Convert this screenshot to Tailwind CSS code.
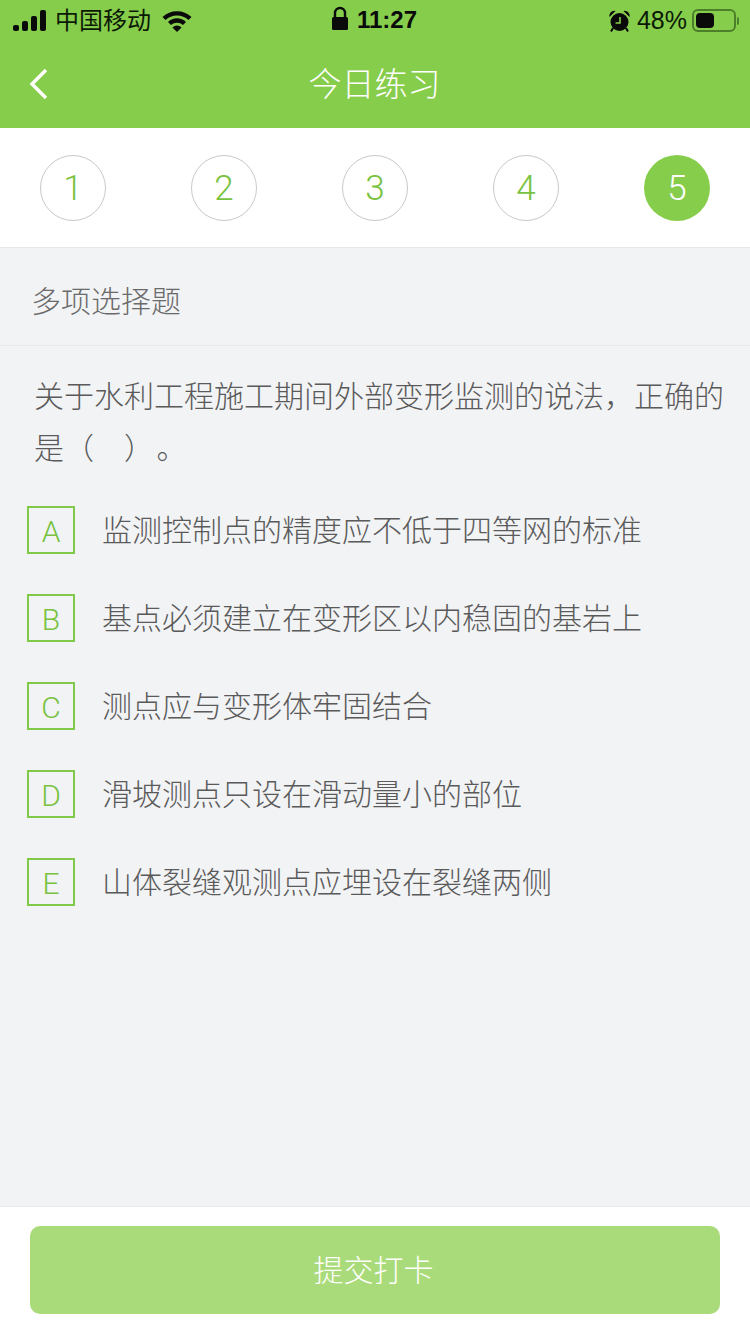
<!DOCTYPE html>
<html lang="en">
<head>
    <meta charset="UTF-8">
    <meta name="viewport" content="width=device-width, initial-scale=1.0">
    <title>今日练习</title>
    <script src="https://cdn.jsdelivr.net/npm/@tailwindcss/browser@4"></script>
</head>
<body class="font-['Liberation_Sans','Noto_Sans_CJK_SC',sans-serif]">
    <div class="w-[750px] h-[1334px] flex flex-col bg-[#f2f3f5] overflow-hidden">
        <!-- header -->
        <div class="h-[128px] bg-[#87cd4c] shrink-0">
            <div class="h-[40px] flex items-center justify-between relative text-[#0b1a05]">
                <div class="flex items-center pl-[13px] pt-[2px] gap-[8px]">
                    <svg width="34" height="22" viewBox="0 0 34 22" fill="#0a0a0a">
                        <rect x="0" y="15" width="6" height="6" rx="2"/>
                        <rect x="9" y="11" width="6" height="10" rx="2"/>
                        <rect x="18" y="6" width="6" height="15" rx="2"/>
                        <rect x="27" y="0" width="6" height="21" rx="2"/>
                    </svg>
                    <span class="text-[24px] leading-none">中国移动</span>
                    <svg class="ml-[3px]" width="30" height="22" viewBox="0 0 30 22" fill="none" stroke="#0a0a0a" stroke-width="4.4">
                        <path d="M2 8.5 A19 19 0 0 1 28 8.5"/>
                        <path d="M7.5 13.5 A11 11 0 0 1 22.5 13.5"/>
                        <path d="M15 22 L10.4 17.4 A6.5 6.5 0 0 1 19.6 17.4 Z" fill="#0a0a0a" stroke="none"/>
                    </svg>
                </div>
                <div class="absolute left-[331px] top-[5px] flex items-center gap-[8px]">
                    <svg width="18" height="26" viewBox="0 0 18 26">
                        <path d="M4 12 V7 A5 5 0 0 1 14 7 V12" fill="none" stroke="#0a0a0a" stroke-width="2.4"/>
                        <rect x="1" y="11" width="16" height="13" rx="1.5" fill="#0a0a0a"/>
                    </svg>
                    <span class="text-[24px] font-bold leading-none text-[#0a0a0a] pt-[3px]">11:27</span>
                </div>
                <div class="flex items-center pr-[11px] pt-[1px]">
                    <svg width="22" height="22" viewBox="0 0 22 22" fill="#0a0a0a">
                        <circle cx="10.5" cy="12" r="9"/>
                        <path d="M0.5 7 A5 5 0 0 1 6.5 1 Z M20.5 7 A5 5 0 0 0 14.5 1 Z"/>
                        <path d="M4 18 L2 21.5 M17 18 L19 21.5" stroke="#0a0a0a" stroke-width="2"/>
                        <path d="M11 7 V13 H6.5" fill="none" stroke="#87cd4c" stroke-width="1.6"/>
                    </svg>
                    <span class="text-[25px] leading-none ml-[6px]">48%</span>
                    <div class="ml-[5px] w-[44px] h-[23px] rounded-[6px] border-2 border-[#4d7f2b] p-[2px]">
                        <div class="w-[18px] h-full rounded-[4px] bg-[#0a0a0a]"></div>
                    </div>
                    <div class="ml-[1px] w-[2px] h-[8px] rounded-r bg-[#4d7f2b]"></div>
                </div>
            </div>
            <div class="h-[88px] relative flex items-center justify-center">
                <svg class="absolute left-[29px] top-[28px]" width="20" height="32" viewBox="0 0 20 32" fill="none" stroke="#fff" stroke-width="3.4">
                    <path d="M17 2 L3 16 L17 30"/>
                </svg>
                <span class="text-[33px] leading-none text-white font-light pr-[1px]">今日练习</span>
            </div>
        </div>
        <!-- question numbers -->
        <div class="h-[120px] bg-white border-b border-[#e8e8e8] shrink-0 flex items-center justify-between px-[40px] font-['Roboto'] font-light">
            <div class="w-[66px] h-[66px] rounded-full border border-[#c9c9c9] flex items-center justify-center pt-[3px] text-[35px] text-[#78c23f]">1</div>
            <div class="w-[66px] h-[66px] rounded-full border border-[#c9c9c9] flex items-center justify-center pt-[3px] text-[35px] text-[#78c23f]">2</div>
            <div class="w-[66px] h-[66px] rounded-full border border-[#c9c9c9] flex items-center justify-center pt-[3px] text-[35px] text-[#78c23f]">3</div>
            <div class="w-[66px] h-[66px] rounded-full border border-[#c9c9c9] flex items-center justify-center pt-[3px] text-[35px] text-[#78c23f]">4</div>
            <div class="w-[66px] h-[66px] rounded-full bg-[#87cd4c] flex items-center justify-center pt-[3px] text-[35px] text-white">5</div>
        </div>
        <!-- question type -->
        <div class="h-[98px] border-b border-[#e8e9eb] shrink-0 flex items-center pl-[31px] pt-[10px] text-[30px] text-[#6a6a6a] font-light">多项选择题</div>
        <!-- question -->
        <div class="pl-[34px] pr-[20px] pt-[25px] text-[30px] leading-[52px] text-[#5a5a5a] font-light">关于水利工程施工期间外部变形监测的说法，正确的是（&emsp;）&hairsp;。</div>
        <!-- options -->
        <div class="flex flex-col gap-[40px] pl-[27px] pt-[31px]">
            <div class="flex items-center h-[48px]">
                <div class="w-[48px] h-[48px] border-2 border-[#82c94a] flex items-center justify-center pt-[2px] text-[30px] text-[#78c23f] font-['Roboto'] font-light">A</div>
                <span class="ml-[27px] text-[30px] text-[#5a5a5a] font-light">监测控制点的精度应不低于四等网的标准</span>
            </div>
            <div class="flex items-center h-[48px]">
                <div class="w-[48px] h-[48px] border-2 border-[#82c94a] flex items-center justify-center pt-[2px] text-[30px] text-[#78c23f] font-['Roboto'] font-light">B</div>
                <span class="ml-[27px] text-[30px] text-[#5a5a5a] font-light">基点必须建立在变形区以内稳固的基岩上</span>
            </div>
            <div class="flex items-center h-[48px]">
                <div class="w-[48px] h-[48px] border-2 border-[#82c94a] flex items-center justify-center pt-[2px] text-[30px] text-[#78c23f] font-['Roboto'] font-light">C</div>
                <span class="ml-[27px] text-[30px] text-[#5a5a5a] font-light">测点应与变形体牢固结合</span>
            </div>
            <div class="flex items-center h-[48px]">
                <div class="w-[48px] h-[48px] border-2 border-[#82c94a] flex items-center justify-center pt-[2px] text-[30px] text-[#78c23f] font-['Roboto'] font-light">D</div>
                <span class="ml-[27px] text-[30px] text-[#5a5a5a] font-light">滑坡测点只设在滑动量小的部位</span>
            </div>
            <div class="flex items-center h-[48px]">
                <div class="w-[48px] h-[48px] border-2 border-[#82c94a] flex items-center justify-center pt-[2px] text-[30px] text-[#78c23f] font-['Roboto'] font-light">E</div>
                <span class="ml-[27px] text-[30px] text-[#5a5a5a] font-light">山体裂缝观测点应埋设在裂缝两侧</span>
            </div>
        </div>
        <!-- footer -->
        <div class="mt-auto h-[128px] bg-white border-t border-[#e8e8e8] shrink-0 px-[30px] pt-[19px]">
            <div class="h-[88px] rounded-[10px] bg-[#aadb7a] flex items-center justify-center text-[30px] text-white font-light pr-[3px]">提交打卡</div>
        </div>
    </div>
</body>
</html>
